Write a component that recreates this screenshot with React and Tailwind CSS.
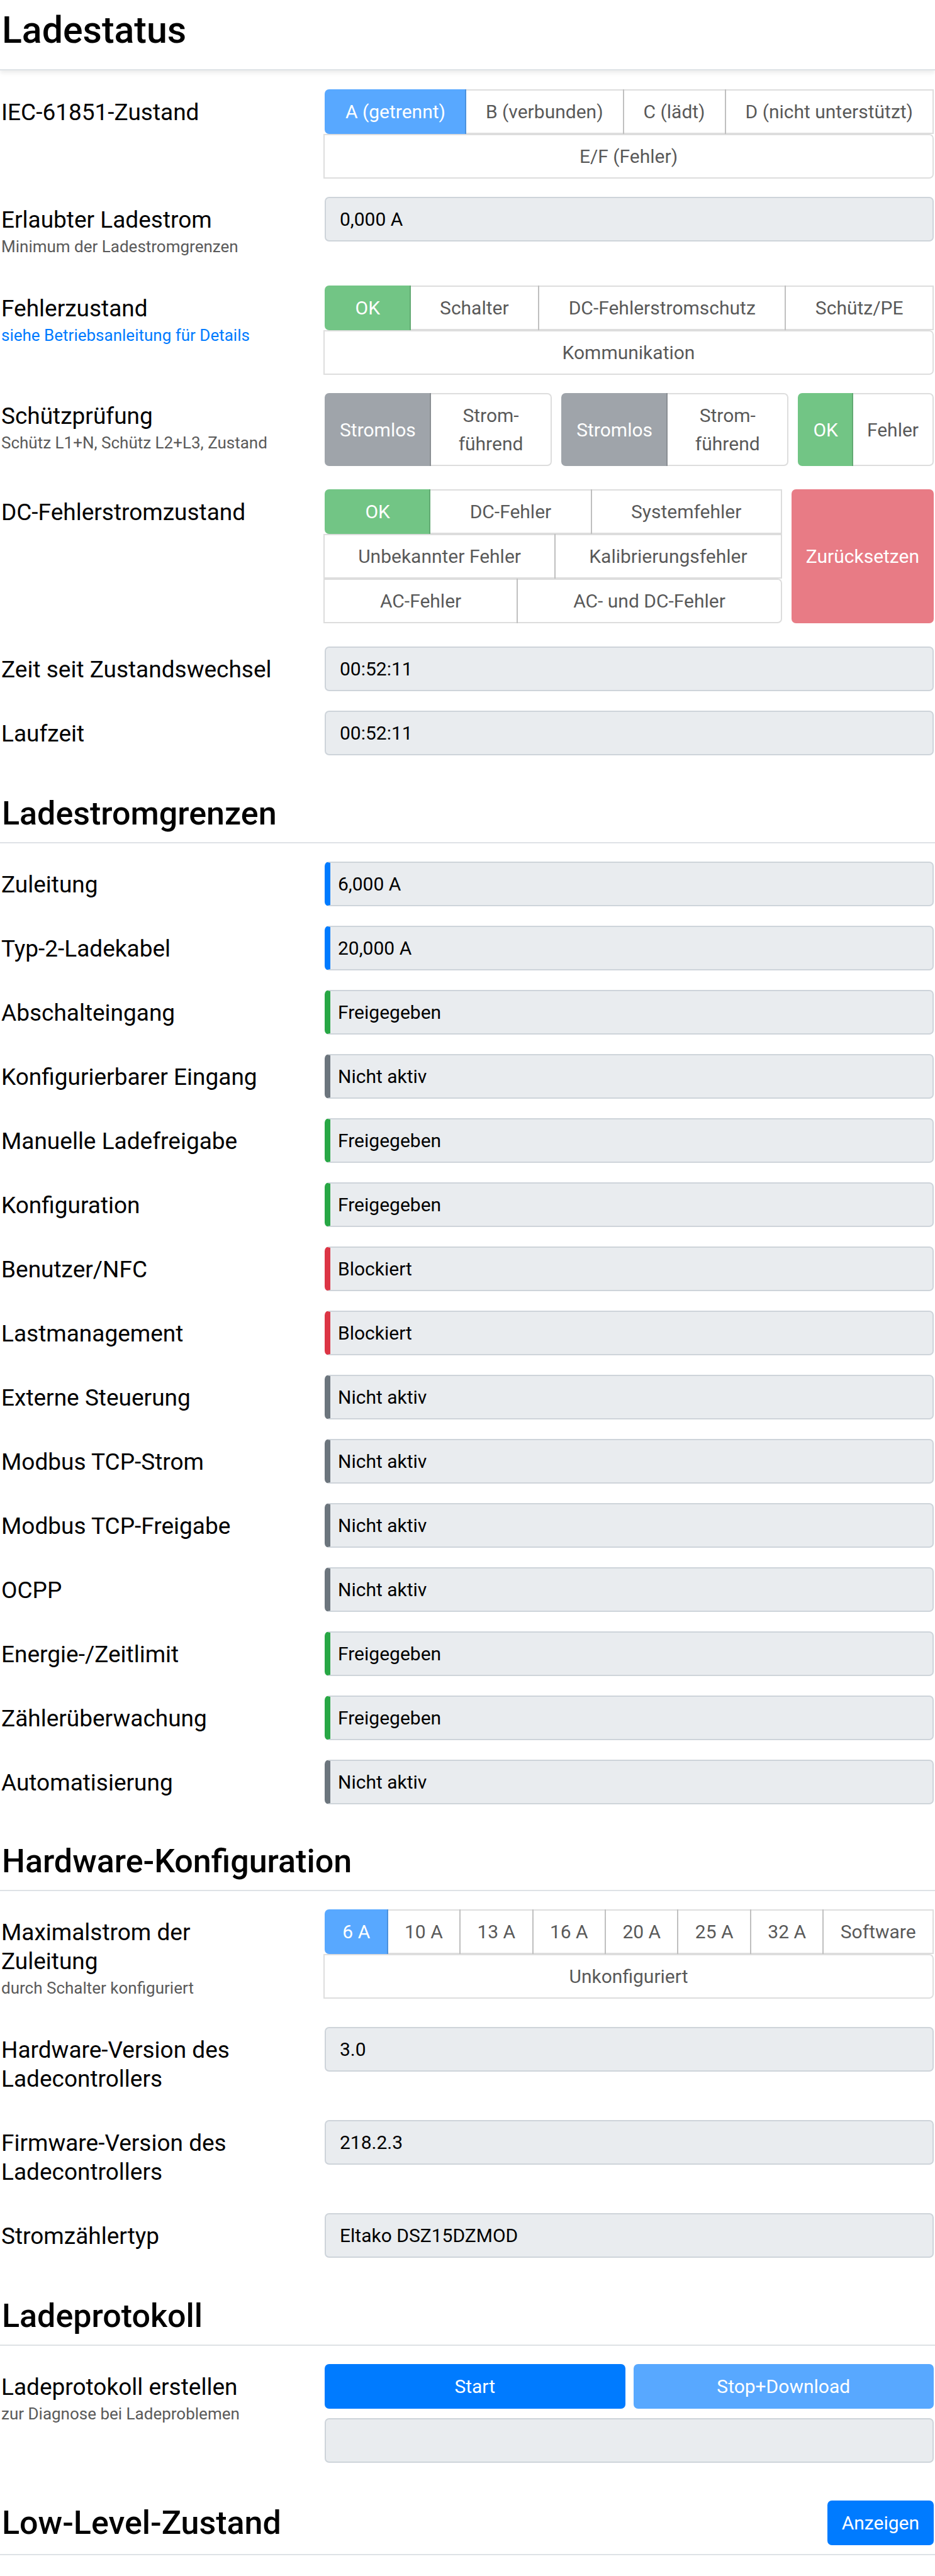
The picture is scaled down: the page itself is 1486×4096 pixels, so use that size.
const GROUP_TONES = {
  off: "border-black/20 text-black",
  blue: "border-[#007bff] bg-[#007bff] text-white",
  green: "border-[#28a745] bg-[#28a745] text-white",
  gray: "border-[#6c757d] bg-[#6c757d] text-white",
};

const BAR_TONES = {
  blue: "border-l-[#007bff]",
  green: "border-l-[#28a745]",
  red: "border-l-[#dc3545]",
  gray: "border-l-[#6c757d]",
};

function Row({ label, hint, href, htmlFor, className = "", children }) {
  return (
    <div className={"grid grid-cols-[514px_1fr] items-start " + className}>
      <div className="pt-[14px] pr-[60px]">
        <label htmlFor={htmlFor} className="block text-[37px] leading-[46px]">{label}</label>
        {hint && !href && <small className="block whitespace-nowrap text-[26px] leading-[39px] text-[#5a5a5a]">{hint}</small>}
        {href && <a href={href} className="block whitespace-nowrap text-[26px] leading-[39px] text-[#007bff]">{hint}</a>}
      </div>
      <div className="min-w-0">{children}</div>
    </div>
  );
}

function Group({ items, label, className = "flex-wrap" }) {
  return (
    <div role="group" aria-label={label} className={"flex " + className}>
      {items.map(([text, tone = "off"], i) => {
        const first = i === 0;
        const last = i === items.length - 1;
        return (
          <button
            key={text}
            type="button"
            disabled
            className={
              "flex-auto border-2 px-[22px] py-[11px] text-center text-[30px] leading-[45px] opacity-65 " +
              GROUP_TONES[tone] +
              (first ? " rounded-l-[7px]" : " -ml-[2px]") +
              (last ? " rounded-r-[7px]" : "")
            }
          >
            {text}
          </button>
        );
      })}
    </div>
  );
}

function TextField({ id, value, label }) {
  return (
    <input
      id={id}
      type="text"
      readOnly
      aria-label={label}
      value={value}
      className="block h-[71px] w-full rounded-[7px] border-2 border-[#ced4da] bg-[#e9ecef] px-[22px] text-[30px] leading-[45px] text-black outline-none"
    />
  );
}

function BarField({ id, value, tone }) {
  return (
    <input
      id={id}
      type="text"
      readOnly
      value={value}
      className={
        "block h-[71px] w-full rounded-[7px] border-2 border-l-[9px] border-[#ced4da] bg-[#e9ecef] px-[12px] text-[30px] leading-[45px] text-black outline-none " +
        BAR_TONES[tone]
      }
    />
  );
}

function Heading({ children, className = "" }) {
  return (
    <div className={"flex items-center justify-between border-b-2 border-[#dee2e6] pr-[2px] pl-[3px] pb-[14px] " + className}>
      {children}
    </div>
  );
}

const LIMITS = [
  ["Zuleitung", "6,000 A", "blue"],
  ["Typ-2-Ladekabel", "20,000 A", "blue"],
  ["Abschalteingang", "Freigegeben", "green"],
  ["Konfigurierbarer Eingang", "Nicht aktiv", "gray"],
  ["Manuelle Ladefreigabe", "Freigegeben", "green"],
  ["Konfiguration", "Freigegeben", "green"],
  ["Benutzer/NFC", "Blockiert", "red"],
  ["Lastmanagement", "Blockiert", "red"],
  ["Externe Steuerung", "Nicht aktiv", "gray"],
  ["Modbus TCP-Strom", "Nicht aktiv", "gray"],
  ["Modbus TCP-Freigabe", "Nicht aktiv", "gray"],
  ["OCPP", "Nicht aktiv", "gray"],
  ["Energie-/Zeitlimit", "Freigegeben", "green"],
  ["Zählerüberwachung", "Freigegeben", "green"],
  ["Automatisierung", "Nicht aktiv", "gray"],
];

export default function App() {
  return (
    <main className="bg-white pb-[33px] font-[Roboto,sans-serif] text-black">
      <header className="border-b-2 border-[#dee2e6] pt-[12px] pb-[27px] pl-[3px] shadow-[0_4px_7px_rgba(0,0,0,0.08)]">
        <h1 className="text-[59px] leading-[71px] font-medium">Ladestatus</h1>
      </header>

      <section className="pt-[30px] pr-[2px] pl-[2px]">
        <Row label="IEC-61851-Zustand" className="mb-[29px]">
          <Group
            label="IEC-61851-Zustand"
            items={[["A (getrennt)", "blue"], ["B (verbunden)"], ["C (lädt)"], ["D (nicht unterstützt)"], ["E/F (Fehler)"]]}
          />
        </Row>
        <Row label="Erlaubter Ladestrom" hint="Minimum der Ladestromgrenzen" htmlFor="strom" className="mb-[42px]">
          <TextField id="strom" value="0,000 A" />
        </Row>
        <Row label="Fehlerzustand" hint="siehe Betriebsanleitung für Details" href="#anleitung" className="mb-[29px]">
          <Group
            label="Fehlerzustand"
            items={[["OK", "green"], ["Schalter"], ["DC-Fehlerstromschutz"], ["Schütz/PE"], ["Kommunikation"]]}
          />
        </Row>
        <Row label="Schützprüfung" hint="Schütz L1+N, Schütz L2+L3, Zustand" className="mb-[37px]">
          <div className="flex gap-[15px]">
            <Group label="Schütz L1+N" className="min-w-0 flex-1" items={[["Stromlos", "gray"], ["Strom-führend"]]} />
            <Group label="Schütz L2+L3" className="min-w-0 flex-1" items={[["Stromlos", "gray"], ["Strom-führend"]]} />
            <Group label="Zustand" className="shrink-0" items={[["OK", "green"], ["Fehler"]]} />
          </div>
        </Row>
        <Row label="DC-Fehlerstromzustand" className="mb-[37px]">
          <div className="flex gap-[15px]">
            <Group
              label="DC-Fehlerstromzustand"
              className="min-w-0 flex-1 flex-wrap"
              items={[
                ["OK", "green"],
                ["DC-Fehler"],
                ["Systemfehler"],
                ["Unbekannter Fehler"],
                ["Kalibrierungsfehler"],
                ["AC-Fehler"],
                ["AC- und DC-Fehler"],
              ]}
            />
            <button
              type="button"
              disabled
              className="rounded-[7px] bg-[#dc3545] px-[23px] text-[30px] leading-[45px] text-white opacity-65"
            >
              Zurücksetzen
            </button>
          </div>
        </Row>
        <Row label="Zeit seit Zustandswechsel" htmlFor="wechsel" className="mb-[31px]">
          <TextField id="wechsel" value="00:52:11" />
        </Row>
        <Row label="Laufzeit" htmlFor="laufzeit">
          <TextField id="laufzeit" value="00:52:11" />
        </Row>
      </section>

      <Heading className="mt-[62px]">
        <h2 className="text-[52px] leading-[62px] font-medium">Ladestromgrenzen</h2>
      </Heading>
      <section className="flex flex-col gap-[31px] px-[2px] pt-[29px]">
        {LIMITS.map(([label, value, tone], i) => (
          <Row key={label} label={label} htmlFor={"grenze-" + i}>
            <BarField id={"grenze-" + i} value={value} tone={tone} />
          </Row>
        ))}
      </section>

      <Heading className="mt-[60px]">
        <h2 className="text-[52px] leading-[62px] font-medium">Hardware-Konfiguration</h2>
      </Heading>
      <section className="px-[2px] pt-[29px]">
        <Row label="Maximalstrom der Zuleitung" hint="durch Schalter konfiguriert" className="mb-[42px]">
          <Group
            label="Maximalstrom der Zuleitung"
            items={[["6 A", "blue"], ["10 A"], ["13 A"], ["16 A"], ["20 A"], ["25 A"], ["32 A"], ["Software"], ["Unkonfiguriert"]]}
          />
        </Row>
        <Row label="Hardware-Version des Ladecontrollers" htmlFor="hw" className="mb-[42px]">
          <TextField id="hw" value="3.0" />
        </Row>
        <Row label="Firmware-Version des Ladecontrollers" htmlFor="fw" className="mb-[42px]">
          <TextField id="fw" value="218.2.3" />
        </Row>
        <Row label="Stromzählertyp" htmlFor="zaehler">
          <TextField id="zaehler" value="Eltako DSZ15DZMOD" />
        </Row>
      </section>

      <Heading className="mt-[62px]">
        <h2 className="text-[52px] leading-[62px] font-medium">Ladeprotokoll</h2>
      </Heading>
      <section className="px-[2px] pt-[29px]">
        <Row label="Ladeprotokoll erstellen" hint="zur Diagnose bei Ladeproblemen">
          <div className="mb-[15px] grid grid-cols-2 gap-[13px]">
            <button type="button" className="h-[71px] rounded-[7px] bg-[#007bff] text-[30px] leading-[45px] text-white">
              Start
            </button>
            <button type="button" disabled className="h-[71px] rounded-[7px] bg-[#007bff] text-[30px] leading-[45px] text-white opacity-65">
              Stop+Download
            </button>
          </div>
          <TextField label="Ladeprotokoll" value="" />
        </Row>
      </section>

      <Heading className="mt-[60px]">
        <h2 className="text-[52px] leading-[62px] font-medium">Low-Level-Zustand</h2>
        <button type="button" className="h-[71px] rounded-[7px] bg-[#007bff] px-[23px] text-[30px] leading-[45px] text-white">
          Anzeigen
        </button>
      </Heading>
    </main>
  );
}
